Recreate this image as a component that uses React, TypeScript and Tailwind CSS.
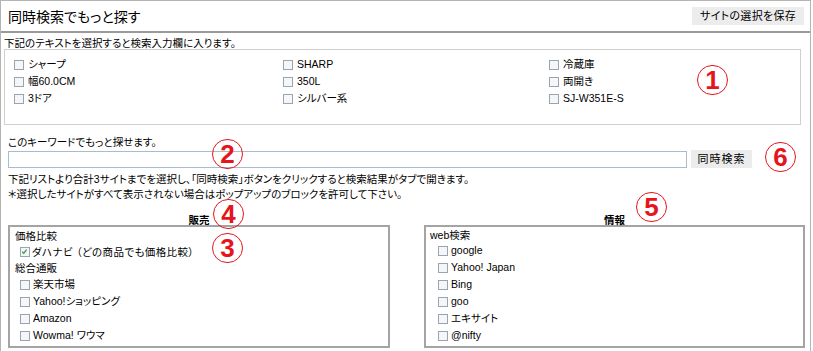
import React from "react";

const keywords = [
    ["シャープ", "SHARP", "冷蔵庫"],
    ["幅60.0CM", "350L", "両開き"],
    ["3ドア", "シルバー系", "SJ-W351E-S"],
];

const shopSites = ["楽天市場", "Yahoo!ショッピング", "Amazon", "Wowma! ワウマ"];
const infoSites = ["google", "Yahoo! Japan", "Bing", "goo", "エキサイト", "@nifty"];

function Check({ checked = false }: { checked?: boolean }) {
    return (
        <span className="relative inline-block w-[10px] h-[10px] shrink-0 border border-[#98a4b2] bg-[#f4f6f8]">
            {checked && (
                <svg viewBox="0 0 10 10" className="absolute left-0 top-0 w-[8px] h-[8px]">
                    <path d="M1.5 4.5 L3.5 6.5 L7 2" stroke="#3a9a3a" strokeWidth="1.6" fill="none" />
                </svg>
            )}
        </span>
    );
}

function Mark({ n, className }: { n: string; className: string }) {
    return (
        <div
            className={
                "absolute w-[31px] h-[30px] rounded-full border-[1.5px] border-[#e8141c] flex items-center justify-center text-[26px] font-bold leading-none text-[#e8141c] font-['Liberation_Sans',sans-serif] " +
                className
            }
        >
            {n}
        </div>
    );
}

export default function App() {
    return (
        <div className="relative w-[813px] h-[351px] overflow-hidden bg-white text-black text-[10.5px] font-['Liberation_Sans','Noto_Sans_CJK_JP',sans-serif] [font-feature-settings:'palt']">
            <div className="w-[811px] border-l border-r border-t border-[#b4b4b4] h-[360px]">
                {/* header */}
                <div className="flex items-center justify-between h-[32px] pl-[7px] pr-[6px] border-b-2 border-[#9a9a9a]">
                    <h1 className="text-[14px] leading-none pt-[1px]">同時検索でもっと探す</h1>
                    <button className="h-[18px] px-[8px] bg-[#ececec] text-[11px] leading-none tracking-[0.3px]">
                        サイトの選択を保存
                    </button>
                </div>

                <div className="pl-[3px] pr-[9px]">
                    <p className="leading-none pt-[5px] h-[16px]">下記のテキストを選択すると検索入力欄に入ります。</p>
                    <div className="h-[76px] border border-[#cfcfcf] pl-[9px] pt-[6px]">
                        {keywords.map((row, i) => (
                            <div key={i} className="grid grid-cols-[269px_266px_1fr] h-[17px] items-center">
                                {row.map((k) => (
                                    <label key={k} className="flex items-center gap-[4px] leading-none">
                                        <Check />
                                        <span>{k}</span>
                                    </label>
                                ))}
                            </div>
                        ))}
                    </div>
                </div>

                <div className="pl-[7px] pt-[12px]">
                    <p className="leading-none h-[12px]">このキーワードでもっと探せます。</p>
                    <div className="flex items-center gap-[4px] mt-[1px]">
                        <input className="w-[679px] h-[17px] border border-[#a9bccd] bg-white outline-none" />
                        <button className="h-[18px] w-[61px] bg-[#ececec] text-[11px] leading-none tracking-[1px]">
                            同時検索
                        </button>
                    </div>
                    <p className="leading-none mt-[6px] h-[15px]">
                        下記リストより合計3サイトまでを選択し、「同時検索」ボタンをクリックすると検索結果がタブで開きます。
                    </p>
                    <p className="leading-none h-[15px]">＊選択したサイトがすべて表示されない場合はポップアップのブロックを許可して下さい。</p>
                </div>

                <div className="flex gap-[34px] pl-[7px] pt-[10px]">
                    <div className="w-[382px]">
                        <p className="text-center leading-none font-bold h-[11px] pt-[1px]">販売</p>
                        <div className="h-[123px] border-2 border-[#a4a4a4] pl-[5px] pt-[1px]">
                            <p className="h-[16px] leading-none flex items-center">価格比較</p>
                            <label className="flex items-center gap-[2px] h-[16px] pl-[5px] leading-none">
                                <Check checked />
                                <span className="tracking-[0.4px]">ダハナビ （どの商品でも価格比較）</span>
                            </label>
                            <p className="h-[16px] leading-none flex items-center">総合通販</p>
                            {shopSites.map((s) => (
                                <label key={s} className="flex items-center gap-[3px] h-[17px] pl-[5px] leading-none">
                                    <Check />
                                    <span>{s}</span>
                                </label>
                            ))}
                        </div>
                    </div>
                    <div className="w-[381px]">
                        <p className="text-center leading-none font-bold h-[11px] pt-[1px]">情報</p>
                        <div className="h-[123px] border-2 border-[#a4a4a4] pl-[4px] pt-[2px]">
                            <p className="h-[13px] leading-none flex items-center">web検索</p>
                            {infoSites.map((s) => (
                                <label key={s} className="flex items-center gap-[3px] h-[17px] pl-[8px] leading-none">
                                    <Check />
                                    <span>{s}</span>
                                </label>
                            ))}
                        </div>
                    </div>
                </div>
            </div>

            {/* annotation marks */}
            <Mark n="1" className="left-[697px] top-[65px]" />
            <Mark n="2" className="left-[212px] top-[139px]" />
            <Mark n="6" className="left-[765px] top-[142px]" />
            <Mark n="4" className="left-[213px] top-[199px]" />
            <Mark n="5" className="left-[636px] top-[192px]" />
            <Mark n="3" className="left-[212px] top-[233px]" />
        </div>
    );
}
